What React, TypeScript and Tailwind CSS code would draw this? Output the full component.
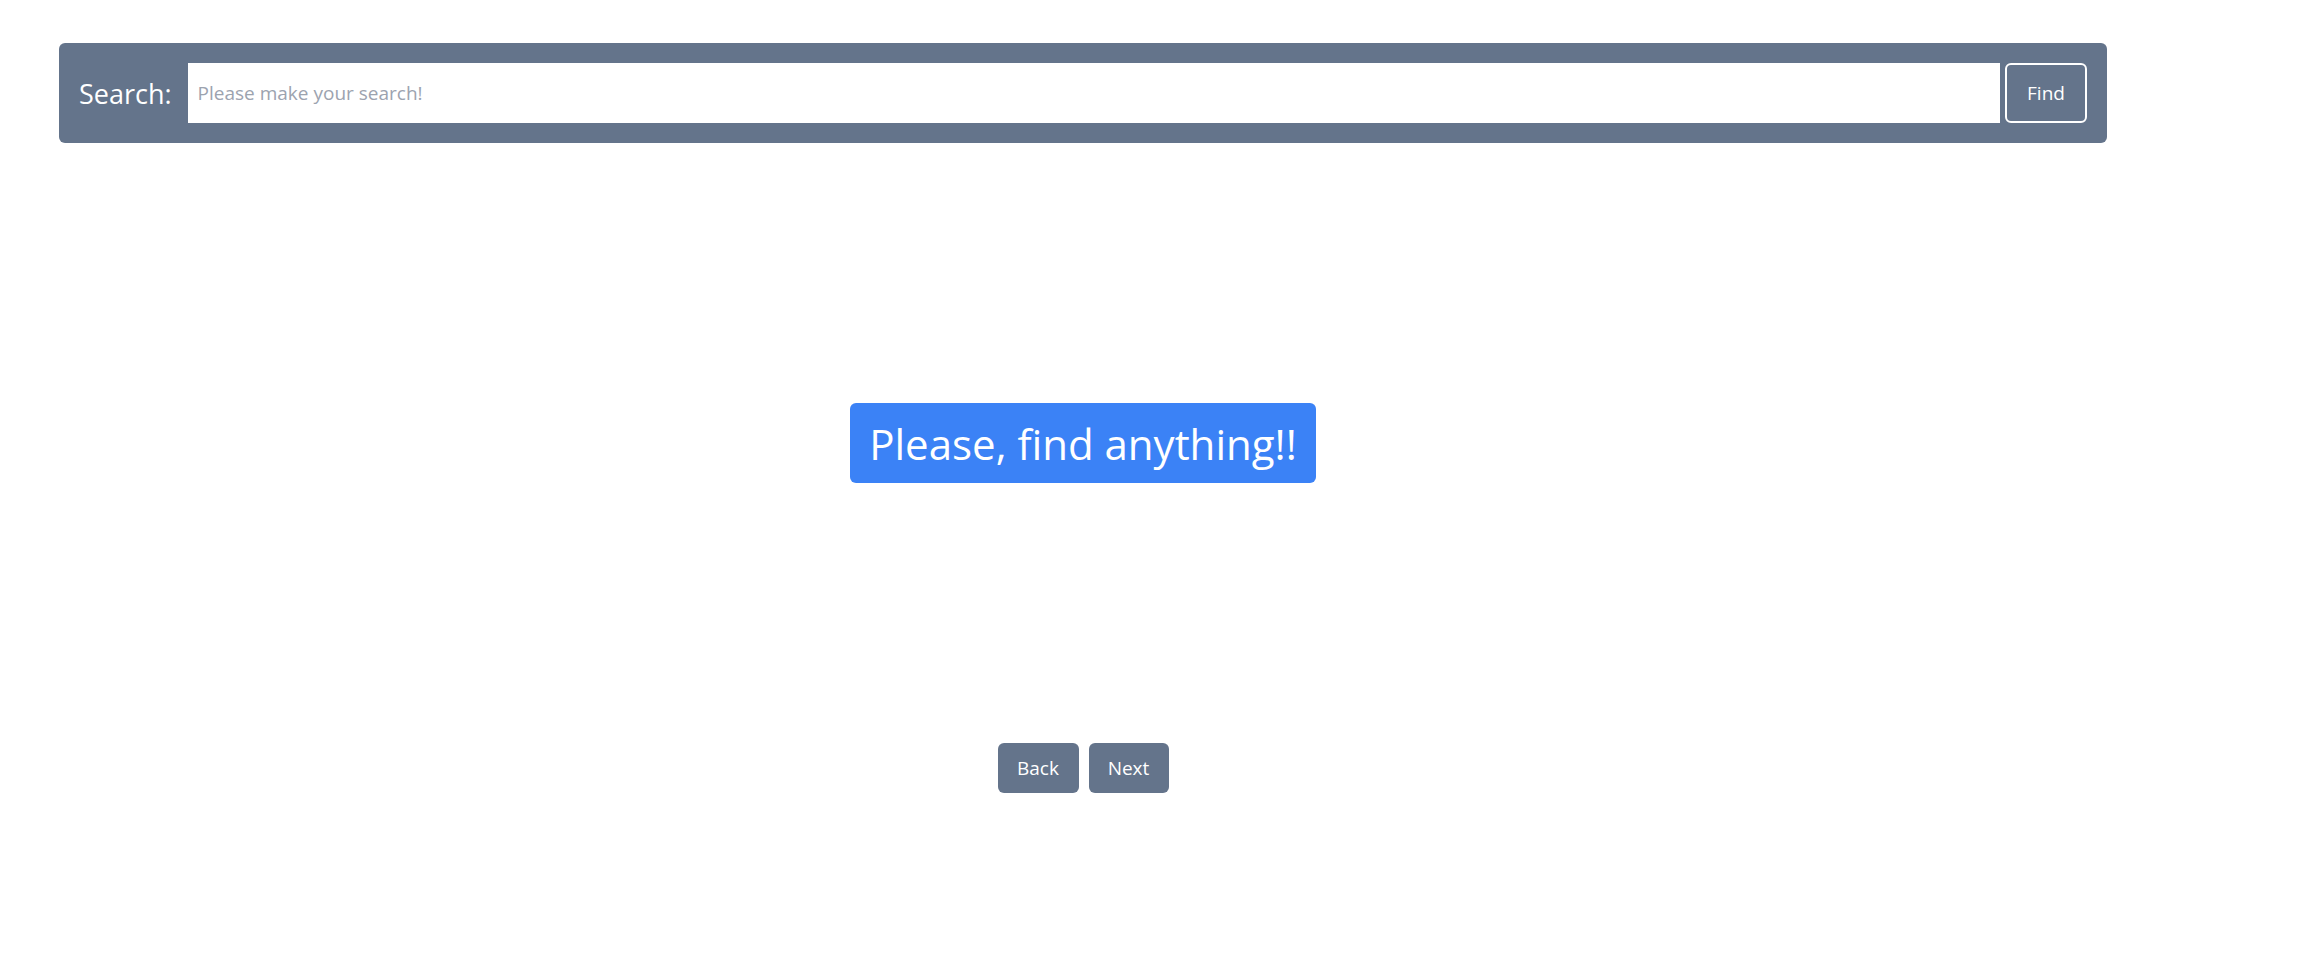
export default function App() {
  return (
    <div className="min-h-screen bg-white font-['Open_Sans',sans-serif]">
      <div className="ml-[59px] w-[2048px] pt-[43px]">
        <div className="flex items-center rounded-md bg-[#64748b] p-5">
          <label className="mr-4 text-[27px] leading-none text-white">Search:</label>
          <input
            className="h-[60px] flex-1 bg-white px-2.5 text-[19px] text-gray-700 outline-none placeholder:text-[#9ca3af]"
            placeholder="Please make your search!"
          />
          <button className="ml-[5px] h-[60px] w-[82px] rounded-md border-2 border-white text-[19px] text-white">
            Find
          </button>
        </div>

        <div className="flex justify-center pt-[260px]">
          <div className="flex h-[80px] w-[466px] items-center justify-center rounded-md bg-[#3b82f6] text-[42px] text-white">
            Please, find anything!!
          </div>
        </div>

        <div className="flex justify-center gap-2.5 pt-[260px]">
          <button className="h-[50px] w-[81px] rounded-md bg-[#64748b] text-[19px] text-white">Back</button>
          <button className="h-[50px] w-[80px] rounded-md bg-[#64748b] text-[19px] text-white">Next</button>
        </div>
      </div>
    </div>
  );
}
